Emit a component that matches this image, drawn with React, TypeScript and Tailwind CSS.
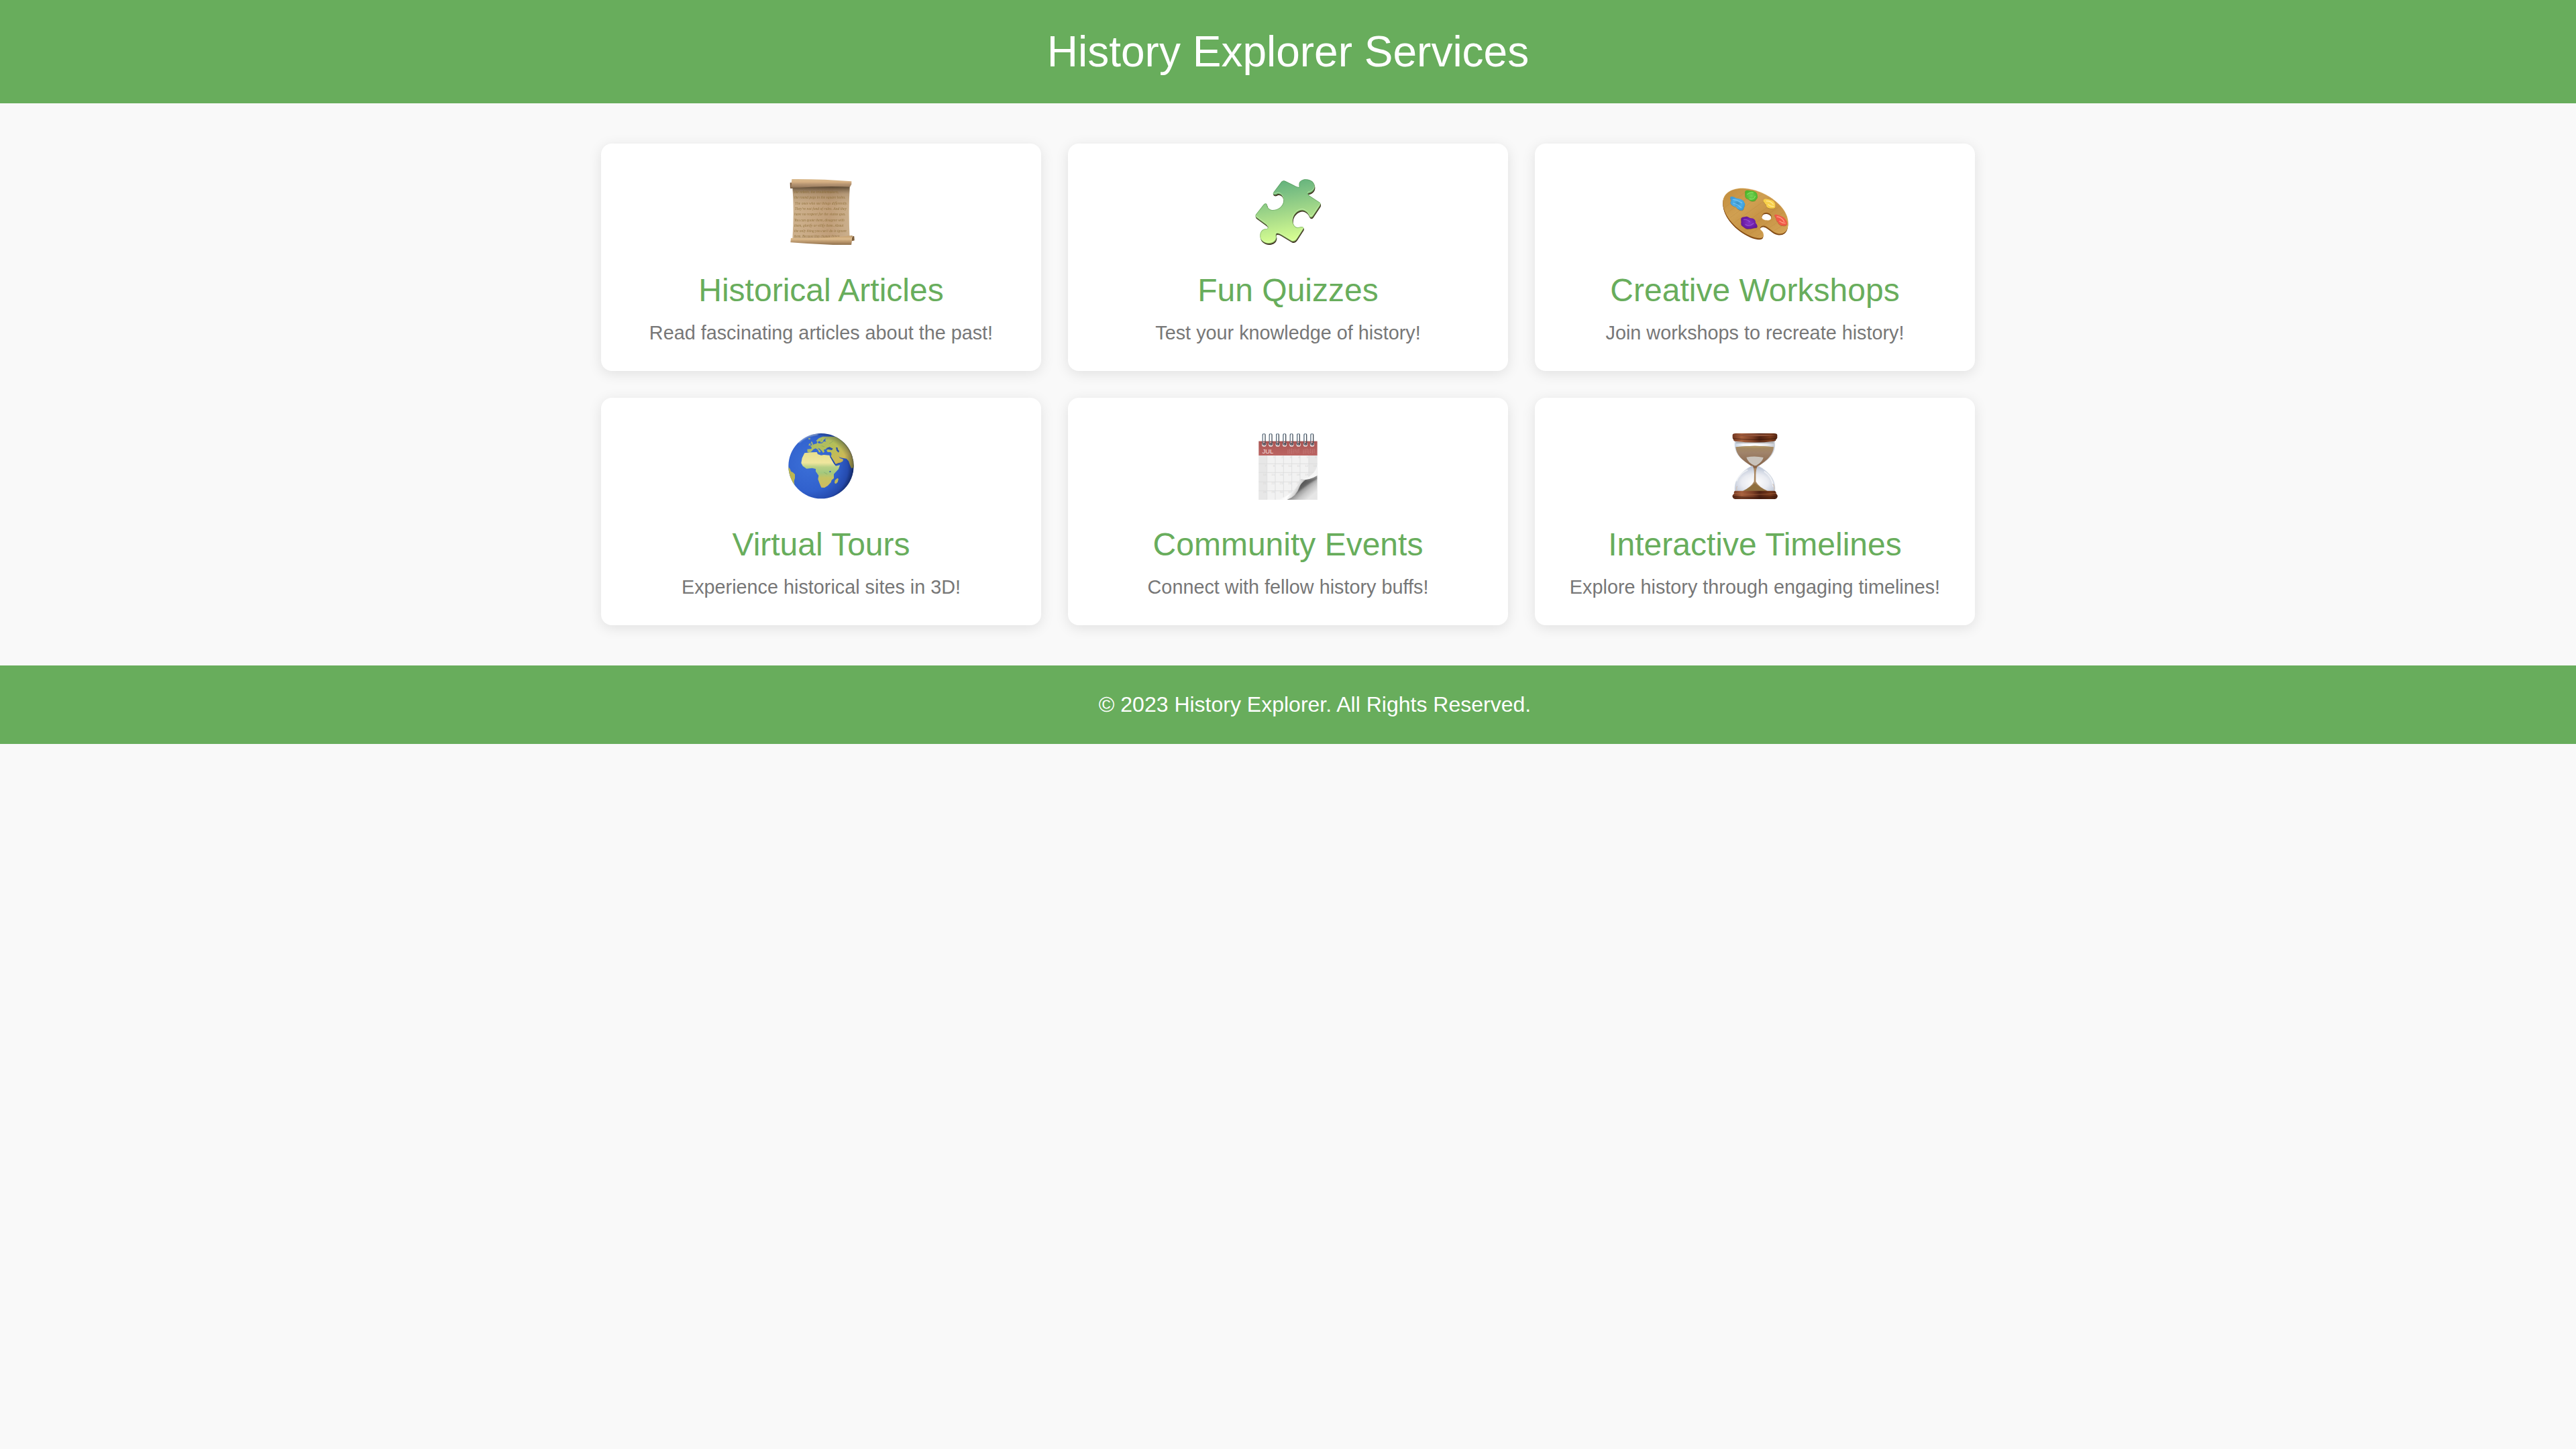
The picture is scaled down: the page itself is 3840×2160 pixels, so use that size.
import type { ReactNode } from "react";

const scrollLines: [string, number, number, number][] = [
  ["the rebels, the troublemakers,", 114, 72, 198],
  ["the round pegs in the square holes.", 139, 72, 230],
  ["The ones who see things differently.", 164, 75, 235],
  ["They're not fond of rules. And they", 189, 74, 232],
  ["have no respect for the status quo.", 214, 72, 230],
  ["You can quote them, disagree with", 239, 72, 224],
  ["them, glorify or vilify them. About", 264, 71, 221],
  ["the only thing you can't do is ignore", 289, 71, 235],
  ["them. Because they change things", 311, 71, 204],
];

function ScrollIcon() {
  return (
    <svg viewBox="42 45 300 300" className="size-[100px]">
      <defs>
        <linearGradient id="paper" x1="0" x2="1" y1="0" y2="0">
          <stop offset="0" stopColor="#cdb18d" />
          <stop offset="0.3" stopColor="#c9aa86" />
          <stop offset="0.65" stopColor="#c19f7a" />
          <stop offset="1" stopColor="#cbb08d" />
        </linearGradient>
        <linearGradient id="paperShade" x1="0" x2="0" y1="0" y2="1">
          <stop offset="0" stopColor="#3f301f" stopOpacity="0.85" />
          <stop offset="0.15" stopColor="#6a5238" stopOpacity="0.22" />
          <stop offset="0.35" stopColor="#6a5238" stopOpacity="0" />
        </linearGradient>
        <linearGradient id="rollTop" x1="0" x2="0" y1="0" y2="1">
          <stop offset="0" stopColor="#d9b98c" />
          <stop offset="0.3" stopColor="#d6b083" />
          <stop offset="0.55" stopColor="#b59472" />
          <stop offset="0.8" stopColor="#a08263" />
          <stop offset="1" stopColor="#6d543a" />
        </linearGradient>
        <linearGradient id="rollBottom" x1="0" x2="0" y1="0" y2="1">
          <stop offset="0" stopColor="#c09b6c" />
          <stop offset="0.35" stopColor="#dcbb8d" />
          <stop offset="0.65" stopColor="#b8956b" />
          <stop offset="1" stopColor="#8a6c49" />
        </linearGradient>
      </defs>
      <path d="M64 82L320 82Q314 200 320 318L64 318Q72 200 64 82Z" fill="url(#paper)" />
      <path d="M64 82L320 82Q314 200 320 318L64 318Q72 200 64 82Z" fill="url(#paperShade)" />
      <g fill="#8a6c35" fontFamily="'Liberation Serif', serif" fontStyle="italic" fontSize="17" opacity="0.85">
        {scrollLines.map(([line, y, x, w]) => (
          <text key={line} x={x} y={y} textLength={w} lengthAdjust="spacingAndGlyphs">
            {line}
          </text>
        ))}
      </g>
      <path d="M53 67L63 67L66 89L54 93Z" fill="#79583a" />
      <path d="M61 51Q200 50 328 61L328 74L321 86Q190 80 56 93L59 72Z" fill="url(#rollTop)" />
      <path d="M57 315Q200 318 331 303L341 325L330 327L327 347Q190 345 55 334Z" fill="url(#rollBottom)" />
      <path d="M329 305L340 307L341 325L330 328Z" fill="#7b5c3b" />
      <path d="M332 306L326 322" stroke="#e6c99d" strokeWidth="3" />
    </svg>
  );
}

const puzzlePath =
  "M130 119Q126 116 130 110L166 62Q174 54 184 60L222 79Q236 87 243 87C249 83 241 78 246 66C255 48 286 47 303 61C320 76 317 101 299 110C289 115 282 113 285 118Q288 124 297 129L337 155Q343 160 338 170L306 218Q298 227 291 218C286 206 279 195 262 191C239 189 218 211 216 234C216 248 219 257 230 265Q238 270 253 264Q267 262 264 274L235 319Q226 333 212 329L165 301Q151 292 143 295C138 304 148 307 140 323C130 341 98 345 80 328C66 315 66 288 83 277C96 271 102 277 105 268Q106 262 96 254L55 224Q46 218 51 209L85 166Q93 156 100 162C102 173 106 184 119 188C147 193 172 174 175 150C175 132 168 121 156 118Q148 116 144 120Q136 123 130 119Z";

function PuzzleIcon() {
  return (
    <svg viewBox="45 45 300 300" className="size-[100px] overflow-visible">
      <defs>
        <linearGradient id="puzzle" gradientUnits="userSpaceOnUse" x1="170" y1="55" x2="215" y2="325">
          <stop offset="0" stopColor="#62b17c" />
          <stop offset="0.25" stopColor="#80c384" />
          <stop offset="0.6" stopColor="#aadd8a" />
          <stop offset="1" stopColor="#d8ff92" />
        </linearGradient>
        <filter id="puzzleSoft" x="-10%" y="-10%" width="120%" height="120%">
          <feGaussianBlur stdDeviation="2" />
        </filter>
        <clipPath id="puzzleClip">
          <path d={puzzlePath} />
        </clipPath>
      </defs>
      <path d={puzzlePath} fill="#3d3321" transform="translate(2 6)" />
      <path d={puzzlePath} fill="#4d4529" transform="translate(1 3)" />
      <path d={puzzlePath} fill="url(#puzzle)" />
      <g clipPath="url(#puzzleClip)">
        <path d={puzzlePath} fill="none" stroke="#4f8c4a" strokeWidth="5" opacity="0.5" filter="url(#puzzleSoft)" />
        <path d={puzzlePath} fill="none" stroke="#e0ffc0" strokeWidth="3" opacity="0.55" transform="translate(-1 -6)" filter="url(#puzzleSoft)" />
      </g>
    </svg>
  );
}

const palettePath =
  "M56 150C58 112 98 91 145 92C205 94 272 126 312 170C338 198 352 233 345 264C341 288 322 298 301 294C277 290 259 263 240 259C224 257 216 270 225 279C236 288 239 299 234 309C227 319 200 314 177 304C115 277 53 213 56 150ZM231 211C224 223 232 233 249 235C267 237 275 228 272 214C267 200 238 193 231 211Z";

function PaletteIcon() {
  return (
    <svg viewBox="48 45 300 300" className="size-[100px]">
      <defs>
        <linearGradient id="wood" x1="0" x2="1" y1="0" y2="1">
          <stop offset="0" stopColor="#c08b3b" />
          <stop offset="0.35" stopColor="#d0a052" />
          <stop offset="0.6" stopColor="#c69244" />
          <stop offset="1" stopColor="#d8a95b" />
        </linearGradient>
        <clipPath id="paletteClip">
          <path d={palettePath} clipRule="evenodd" />
        </clipPath>
        <radialGradient id="bluePaint">
          <stop offset="0" stopColor="#3b8fc0" />
          <stop offset="0.55" stopColor="#4eaee6" />
          <stop offset="1" stopColor="#3d9cda" />
        </radialGradient>
        <radialGradient id="greenPaint">
          <stop offset="0" stopColor="#74d355" />
          <stop offset="1" stopColor="#4db52b" />
        </radialGradient>
        <radialGradient id="purplePaint">
          <stop offset="0" stopColor="#8433c4" />
          <stop offset="1" stopColor="#65189c" />
        </radialGradient>
      </defs>
      <path d={palettePath} fill="#7a4412" fillRule="evenodd" transform="translate(-1 7)" />
      <path d={palettePath} fill="#8e5417" fillRule="evenodd" transform="translate(-1 4)" />
      <path d={palettePath} fill="url(#wood)" fillRule="evenodd" />
      <g clipPath="url(#paletteClip)" stroke="#8e5d1b" strokeWidth="1.5" opacity="0.2" fill="none">
        <path d="M60 180L180 90M70 205L220 95M85 225L245 107M100 250L275 122M125 268L300 145M145 285L320 165M170 300L340 190M200 310L350 210M255 300L350 240" />
      </g>
      <path d={palettePath} fill="none" stroke="#e0b466" strokeWidth="1.5" opacity="0.6" />
      <path d="M87 134C91 124 104 131 117 137C133 139 150 145 151 157C158 166 150 172 149 180C146 194 134 193 124 186C114 181 119 176 105 173C91 168 84 155 92 149Z" fill="#7b5522" transform="translate(0 2)" opacity="0.5" />
      <path d="M87 134C91 124 104 131 117 137C133 139 150 145 151 157C158 166 150 172 149 180C146 194 134 193 124 186C114 181 119 176 105 173C91 168 84 155 92 149Z" fill="url(#bluePaint)" />
      <path d="M100 142Q120 144 139 157M103 160Q120 162 137 179" stroke="#8bd3ff" strokeWidth="4" fill="none" opacity="0.65" strokeLinecap="round" />
      <path d="M154 106C160 98 171 103 179 103C194 102 210 112 209 124C213 136 204 140 200 147C190 153 178 150 171 143C164 139 153 136 154 124Z" fill="#6c6721" transform="translate(0 2)" opacity="0.5" />
      <path d="M154 106C160 98 171 103 179 103C194 102 210 112 209 124C213 136 204 140 200 147C190 153 178 150 171 143C164 139 153 136 154 124Z" fill="url(#greenPaint)" />
      <path d="M164 119Q174 109 190 112M174 139Q194 145 199 128" stroke="#a1f17d" strokeWidth="3.5" fill="none" opacity="0.65" strokeLinecap="round" />
      <path d="M236 144C244 137 254 140 267 144C280 144 291 157 289 170C292 180 281 184 271 182C260 184 247 177 249 166C242 163 243 155 236 153Z" fill="#8a651f" transform="translate(0 2)" opacity="0.5" />
      <path d="M236 144C244 137 254 140 267 144C280 144 291 157 289 170C292 180 281 184 271 182C260 184 247 177 249 166C242 163 243 155 236 153Z" fill="#f8d04a" />
      <path d="M250 149Q270 149 280 164M258 165Q268 174 282 173" stroke="#ffe995" strokeWidth="4" fill="none" strokeLinecap="round" />
      <path d="M285 213C291 205 302 213 313 216C327 220 341 235 342 246C344 257 332 262 322 259C312 260 301 250 300 241C292 239 295 225 285 213Z" fill="#8a3d1c" transform="translate(0 2)" opacity="0.5" />
      <path d="M285 213C291 205 302 213 313 216C327 220 341 235 342 246C344 257 332 262 322 259C312 260 301 250 300 241C292 239 295 225 285 213Z" fill="#f05a47" />
      <path d="M297 219Q319 222 329 241M309 239Q320 249 334 248" stroke="#ff9a80" strokeWidth="4" fill="none" strokeLinecap="round" />
      <path d="M136 227C143 217 150 222 158 218C169 218 171 224 180 226C193 225 202 234 201 247C210 257 213 269 201 269C190 269 183 275 171 273C160 277 153 268 141 260C132 252 139 245 136 237Z" fill="#5a3512" transform="translate(0 2)" opacity="0.5" />
      <path d="M136 227C143 217 150 222 158 218C169 218 171 224 180 226C193 225 202 234 201 247C210 257 213 269 201 269C190 269 183 275 171 273C160 277 153 268 141 260C132 252 139 245 136 237Z" fill="url(#purplePaint)" />
      <path d="M149 232Q164 230 175 242M156 254Q174 265 192 249" stroke="#a765e0" strokeWidth="3.5" fill="none" opacity="0.7" strokeLinecap="round" />
    </svg>
  );
}

function GlobeIcon() {
  return (
    <svg viewBox="42 42 300 300" className="size-[100px]">
      <defs>
        <radialGradient id="ocean" gradientUnits="userSpaceOnUse" cx="140" cy="180" r="210">
          <stop offset="0" stopColor="#3c70d8" />
          <stop offset="0.6" stopColor="#3161cd" />
          <stop offset="0.85" stopColor="#2449ac" />
          <stop offset="1" stopColor="#152c6c" />
        </radialGradient>
        <linearGradient id="africa" x1="0" x2="0" y1="0" y2="1">
          <stop offset="0" stopColor="#e6de8c" />
          <stop offset="0.3" stopColor="#efe69e" />
          <stop offset="0.42" stopColor="#b8d086" />
          <stop offset="0.58" stopColor="#a3c87e" />
          <stop offset="0.72" stopColor="#c4c364" />
          <stop offset="1" stopColor="#d0ba5c" />
        </linearGradient>
        <linearGradient id="eurasia" x1="0" x2="1" y1="0" y2="1">
          <stop offset="0" stopColor="#a5b96e" />
          <stop offset="0.4" stopColor="#b4bf58" />
          <stop offset="0.7" stopColor="#cdb957" />
          <stop offset="1" stopColor="#938d3c" />
        </linearGradient>
        <radialGradient id="globeShade" gradientUnits="userSpaceOnUse" cx="172" cy="205" r="176">
          <stop offset="0.78" stopColor="#06102e" stopOpacity="0" />
          <stop offset="0.92" stopColor="#06102e" stopOpacity="0.28" />
          <stop offset="1" stopColor="#06102e" stopOpacity="0.75" />
        </radialGradient>
        <clipPath id="globeClip">
          <circle cx="192" cy="194" r="146" />
        </clipPath>
        <filter id="globeSoft">
          <feGaussianBlur stdDeviation="3" />
        </filter>
      </defs>
      <circle cx="192" cy="194" r="146" fill="url(#ocean)" />
      <g clipPath="url(#globeClip)">
        <path d="M46 198L53 207L57 218L66 223L75 231L75 248L71 262L74 285L60 290L40 240Z" fill="#bbb651" />
        <path d="M130 119L149 117L149 109L142 104L152 101L162 96L172 94L176 86L181 93L196 92L204 84L214 85L210 79L214 70L205 76L198 88L190 89L186 82L175 87L170 80L182 70L200 62L232 62L262 64L300 80L340 120L345 200L327 204L321 190L315 172L305 161L288 158L275 155L270 147L275 158L291 164L289 173L268 184L258 188L250 173L236 151L239 140L235 132L221 132L216 124L224 119L217 113L212 119L204 121L207 131L201 135L195 126L185 116L177 114L188 125L190 132L183 133L177 121L167 115L157 120L149 129L141 134L131 131Z" fill="url(#eurasia)" />
        <path d="M118 136L147 133L173 132L177 141L192 146L204 144L229 146L234 155L247 181L258 194L276 190L270 208L249 230L249 249L239 257L236 267L222 282L207 291L193 290L186 274L178 253L181 237L168 218L168 207L152 203L127 206L110 194L103 181L107 158Z" fill="url(#africa)" />
        <path d="M217 113L230 109L245 116L240 123L222 119ZM258 110L266 112L267 120L273 127L270 134L261 125ZM230 216L236 217L234 223L229 221Z" fill="#2e55ab" />
        <path d="M265 248L270 252L266 266L258 274L252 270L254 257Z" fill="#bfb759" />
        <path d="M149 83L153 88L158 103L147 105L151 97L146 91ZM138 94L146 94L144 102L136 103ZM134 70L144 69L143 75L137 76Z" fill="#a2b172" />
        <path d="M233 152L256 188L275 181" stroke="#2449a4" strokeWidth="3.5" fill="none" />
        <path d="M195 74L189 86M215 74L222 72M194 104L207 108M229 94L245 84M205 222L220 231" stroke="#789b63" strokeWidth="3" opacity="0.5" />
        <path d="M90 88Q125 55 178 50" stroke="#d8e5f3" strokeWidth="8" fill="none" opacity="0.75" filter="url(#globeSoft)" />
        <circle cx="192" cy="194" r="147" fill="url(#globeShade)" />
      </g>
    </svg>
  );
}

const calendarRings = [88, 118, 149, 180, 211, 242, 273, 303];
const calendarColumns = [101, 138, 175, 212, 249, 288];
const calendarRows = [184, 223, 265, 305];
const calendarDays = Array.from({ length: 31 }, (_, i) => {
  const slot = i + 1;
  return { day: i + 1, x: 98 + (slot % 7) * 37.5, y: 160 + Math.floor(slot / 7) * 39 };
});

function CalendarIcon() {
  return (
    <svg viewBox="45 42 300 300" className="size-[100px] overflow-visible">
      <defs>
        <linearGradient id="curlShadow" gradientUnits="userSpaceOnUse" x1="240" y1="275" x2="292" y2="335">
          <stop offset="0" stopColor="#5c5c5c" />
          <stop offset="0.3" stopColor="#8c8c8c" />
          <stop offset="0.65" stopColor="#c6c6c6" />
          <stop offset="1" stopColor="#e6e6e6" />
        </linearGradient>
        <linearGradient id="curlPage" gradientUnits="userSpaceOnUse" x1="190" y1="285" x2="240" y2="315">
          <stop offset="0" stopColor="#f3f3f3" />
          <stop offset="0.45" stopColor="#ffffff" />
          <stop offset="0.8" stopColor="#d4d4d4" />
          <stop offset="1" stopColor="#9a9a9a" />
        </linearGradient>
        <linearGradient id="ring" gradientUnits="objectBoundingBox" x1="0" x2="1" y1="0" y2="0">
          <stop offset="0" stopColor="#3d4d5c" />
          <stop offset="0.5" stopColor="#9fb1c2" />
          <stop offset="1" stopColor="#3c4650" />
        </linearGradient>
        <linearGradient id="calendarRed" x1="0" x2="0" y1="0" y2="1">
          <stop offset="0" stopColor="#aa5654" />
          <stop offset="1" stopColor="#bb6462" />
        </linearGradient>
        <filter id="curlSoft">
          <feGaussianBlur stdDeviation="2.5" />
        </filter>
        <clipPath id="calendarClip">
          <rect x="64" y="83" width="262" height="262" />
        </clipPath>
      </defs>
      <rect x="64" y="83" width="262" height="262" fill="#f2f2f2" />
      <rect x="64" y="147" width="37" height="198" fill="#e7e7e7" />
      <rect x="288" y="147" width="38" height="198" fill="#e7e7e7" />
      <g stroke="#dcdcdc" strokeWidth="2.5">
        {calendarColumns.map((x) => (
          <path key={x} d={`M${x} 147V345`} />
        ))}
        {calendarRows.map((y) => (
          <path key={y} d={`M64 ${y}H326`} />
        ))}
      </g>
      <g fill="#d6d6d6" fontFamily="'Liberation Sans', sans-serif" fontSize="13" textAnchor="end">
        {calendarDays.map(({ day, x, y }) => (
          <text key={day} x={x} y={y}>
            {day}
          </text>
        ))}
      </g>
      <g clipPath="url(#calendarClip)">
        <path d="M326 236Q300 252 252 255Q246 312 190 345H326Z" fill="url(#curlShadow)" />
        <path d="M326 244Q292 262 252 257Q250 292 226 322Q262 290 326 250Z" fill="#484848" opacity="0.6" filter="url(#curlSoft)" />
        <path d="M250 256Q222 330 140 345H190Q234 330 246 288Q252 272 274 256Z" fill="url(#curlPage)" />
        <path d="M326 190Q316 240 252 256Q290 258 326 236Z" fill="#f6f6f6" />
      </g>
      <rect x="64" y="83" width="262" height="64" fill="url(#calendarRed)" />
      <text x="80" y="138" fill="#f5dfdd" fontFamily="'Liberation Sans', sans-serif" fontSize="27" textLength="50" lengthAdjust="spacingAndGlyphs">
        JUL
      </text>
      <path d="M195 121V139M203 118V139M211 116V139M219 120V137M227 118V134M235 121V137M243 117V134M264 121V139M272 119V139M280 116V137M288 121V139M296 117V137M304 119V139M312 117V134" stroke="#e0b2af" strokeWidth="3" strokeDasharray="3 2" opacity="0.5" />
      {calendarRings.map((x) => (
        <g key={x}>
          <circle cx={x} cy="98" r="9.5" fill="#eee0df" />
          <circle cx={x + 1} cy="97" r="6" fill="#55363a" />
          <rect x={x - 6} y="50" width="11" height="49" rx="5.5" fill="none" stroke="url(#ring)" strokeWidth="4" />
          <path d={`M${x - 5} 56V92`} stroke="#b9c8d6" strokeWidth="1.5" />
        </g>
      ))}
    </svg>
  );
}

function HourglassIcon() {
  return (
    <svg viewBox="48 42 300 300" className="size-[100px]">
      <defs>
        <linearGradient id="cap" x1="0" x2="1" y1="0" y2="0">
          <stop offset="0" stopColor="#71351f" />
          <stop offset="0.2" stopColor="#a6603d" />
          <stop offset="0.45" stopColor="#7b3e25" />
          <stop offset="0.6" stopColor="#4e2112" />
          <stop offset="0.85" stopColor="#763819" />
          <stop offset="1" stopColor="#502312" />
        </linearGradient>
        <linearGradient id="sand" x1="0" x2="0" y1="0" y2="1">
          <stop offset="0" stopColor="#a68a60" />
          <stop offset="0.35" stopColor="#a0836a" />
          <stop offset="1" stopColor="#87654a" />
        </linearGradient>
        <linearGradient id="glass" x1="0" x2="1" y1="0" y2="0">
          <stop offset="0" stopColor="#c7d3e2" />
          <stop offset="0.2" stopColor="#f0f3f8" />
          <stop offset="0.5" stopColor="#ffffff" />
          <stop offset="0.8" stopColor="#e8e9ed" />
          <stop offset="1" stopColor="#c3c7cf" />
        </linearGradient>
        <radialGradient id="lowerGlass" cx="0.5" cy="0.65" r="0.6">
          <stop offset="0" stopColor="#ffffff" />
          <stop offset="0.55" stopColor="#e9ebf1" />
          <stop offset="1" stopColor="#bcc5d6" />
        </radialGradient>
      </defs>
      <path d="M109 84H286C292 127 273 161 215 192H182C124 161 104 127 109 84Z" fill="url(#glass)" stroke="#c4ccd6" strokeWidth="1.5" />
      <path d="M113 87H282V93H113Z" fill="#9c9d9d" opacity="0.65" />
      <path d="M112 109Q198 99 282 109C280 142 256 168 214 194H182C139 168 114 143 112 109Z" fill="url(#sand)" />
      <path d="M112 109Q198 99 282 109Q198 117 112 109Z" fill="#ae9465" />
      <path d="M160 155Q198 147 236 156Q232 176 204 192H196Q166 178 160 155Z" fill="#cfccc6" opacity="0.9" />
      <path d="M183 194H214C260 220 293 253 287 308H109C103 253 137 220 183 194Z" fill="url(#lowerGlass)" stroke="#c5cedb" strokeWidth="1.5" />
      <path d="M116 262Q126 230 166 211M239 218Q275 240 280 286" stroke="#ffffff" strokeWidth="6" fill="none" opacity="0.6" />
      <path d="M188 193L211 193Q202 208 202 235V263Q217 289 255 305H144Q182 287 194 263L195 232Q195 207 188 193Z" fill="#a98761" />
      <path d="M144 307Q177 290 198 270Q219 291 255 307Z" fill="#8f6f3f" />
      <path d="M186 193H213L203 204H194Z" fill="#89664b" />
      <path d="M119 284Q112 296 119 304M278 274Q290 291 281 303" stroke="#d0c4bb" strokeWidth="4" fill="none" />
      <path d="M98 55Q100 48 112 48H284Q296 48 298 55V68Q296 74 292 75Q294 82 281 84Q198 93 114 84Q101 83 102 75Q98 73 98 66Z" fill="url(#cap)" />
      <path d="M99 57Q198 47 297 57Q198 65 99 57Z" fill="#91533a" />
      <path d="M101 71Q198 81 294 71" stroke="#321408" strokeWidth="3" fill="none" opacity="0.6" />
      <path d="M107 78Q198 89 288 78" stroke="#a9683f" strokeWidth="2" fill="none" opacity="0.55" />
      <path d="M109 305H287Q294 308 293 317L299 325V332Q296 342 281 343H116Q101 342 98 332V325L105 317Q102 308 109 305Z" fill="url(#cap)" />
      <path d="M105 316Q198 327 294 316" stroke="#b6714a" strokeWidth="2.5" fill="none" opacity="0.7" />
      <path d="M99 326Q198 338 298 326V333Q296 342 281 343H116Q101 342 98 332Z" fill="#38180c" opacity="0.55" />
    </svg>
  );
}

type Service = { title: string; description: string; icon: ReactNode };

const services: Service[] = [
  { title: "Historical Articles", description: "Read fascinating articles about the past!", icon: <ScrollIcon /> },
  { title: "Fun Quizzes", description: "Test your knowledge of history!", icon: <PuzzleIcon /> },
  { title: "Creative Workshops", description: "Join workshops to recreate history!", icon: <PaletteIcon /> },
  { title: "Virtual Tours", description: "Experience historical sites in 3D!", icon: <GlobeIcon /> },
  { title: "Community Events", description: "Connect with fellow history buffs!", icon: <CalendarIcon /> },
  { title: "Interactive Timelines", description: "Explore history through engaging timelines!", icon: <HourglassIcon /> },
];

function ServiceCard({ title, description, icon }: Service) {
  return (
    <article className="flex h-[339px] flex-col items-center rounded-[16px] bg-white pt-[51px] text-center shadow-[0_4px_20px_rgba(0,0,0,0.1)]">
      {icon}
      <h2 className="mt-10 text-[48px] leading-[55px] text-[#68ad5c]">{title}</h2>
      <p className="mt-5 text-[28.8px] leading-[33px] text-[#777777]">{description}</p>
    </article>
  );
}

export default function App() {
  return (
    <div className="min-h-[2160px] bg-[#f9f9f9] font-['Liberation_Sans',Arial,sans-serif]">
      <header className="bg-[#68ad5c] py-10 text-center text-white">
        <h1 className="text-[64px] leading-[74px]">History Explorer Services</h1>
      </header>
      <main className="mx-auto grid w-[2048px] grid-cols-3 gap-10 py-[60px]">
        {services.map((service) => (
          <ServiceCard key={service.title} {...service} />
        ))}
      </main>
      <footer className="bg-[#68ad5c] py-10 pl-20 text-center text-white">
        <p className="text-[32px] leading-[37px]">© 2023 History Explorer. All Rights Reserved.</p>
      </footer>
    </div>
  );
}
